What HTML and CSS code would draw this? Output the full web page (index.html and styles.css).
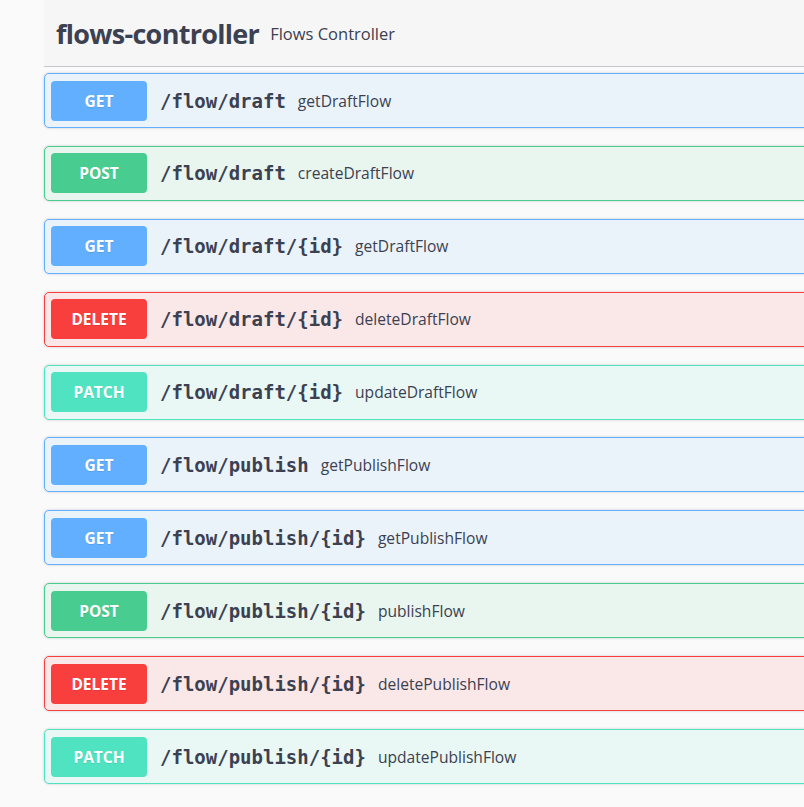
FILE: index.html
```html
<!DOCTYPE html>
<html lang="en">
<head>
<meta charset="utf-8">
<title>flows-controller</title>
<link rel="stylesheet" href="styles.css">
</head>
<body>
<div class="page">
  <div class="inner">
    <div class="tag">
      <h4 class="tag-title">flows-controller</h4>
      <small class="tag-desc">Flows Controller</small>
    </div>
    <div class="ops">
      <div class="op op-get"><span class="method">GET</span><span class="path">/flow/draft</span><span class="desc">getDraftFlow</span></div>
      <div class="op op-post"><span class="method">POST</span><span class="path">/flow/draft</span><span class="desc">createDraftFlow</span></div>
      <div class="op op-get"><span class="method">GET</span><span class="path">/flow/draft/{id}</span><span class="desc">getDraftFlow</span></div>
      <div class="op op-delete"><span class="method">DELETE</span><span class="path">/flow/draft/{id}</span><span class="desc">deleteDraftFlow</span></div>
      <div class="op op-patch"><span class="method">PATCH</span><span class="path">/flow/draft/{id}</span><span class="desc">updateDraftFlow</span></div>
      <div class="op op-get"><span class="method">GET</span><span class="path">/flow/publish</span><span class="desc">getPublishFlow</span></div>
      <div class="op op-get"><span class="method">GET</span><span class="path">/flow/publish/{id}</span><span class="desc">getPublishFlow</span></div>
      <div class="op op-post"><span class="method">POST</span><span class="path">/flow/publish/{id}</span><span class="desc">publishFlow</span></div>
      <div class="op op-delete"><span class="method">DELETE</span><span class="path">/flow/publish/{id}</span><span class="desc">deletePublishFlow</span></div>
      <div class="op op-patch"><span class="method">PATCH</span><span class="path">/flow/publish/{id}</span><span class="desc">updatePublishFlow</span></div>
    </div>
  </div>
</div>
</body>
</html>
```

FILE: styles.css
```css
html, body {
  margin: 0;
  padding: 0;
  background: #fafafa;
}
body {
  font-family: "Open Sans", "Liberation Sans", sans-serif;
  color: #3b4151;
}
.page {
  padding-left: 44px;
  overflow: hidden;
  height: 807px;
}
.inner {
  margin-right: -12px;
}
.tag {
  display: flex;
  align-items: center;
  height: 66px;
  padding: 0 0 0 12px;
  background: #f6f6f6;
  border-bottom: 1px solid #c4c6cb;
  margin-bottom: 6px;
}
.tag-title {
  margin: 0;
  font-size: 27px;
  font-weight: 700;
  letter-spacing: -0.7px;
  color: #3b4151;
}
.tag-desc {
  padding-left: 11px;
  font-size: 16.5px;
  color: #3b4151;
  margin-top: 1px;
}
.ops {
  display: flex;
  flex-direction: column;
  gap: 17.9px;
}
.op {
  display: flex;
  align-items: center;
  height: 53px;
  padding: 0 6px;
  border: 1px solid;
  border-radius: 5px;
  box-shadow: 0 0 3px rgba(0, 0, 0, 0.19);
}
.method {
  display: flex;
  align-items: center;
  justify-content: center;
  width: 96px;
  height: 40px;
  border-radius: 4px;
  color: #fff;
  font-weight: 700;
  font-size: 15.5px;
  text-shadow: 0 1px 0 rgba(0, 0, 0, 0.1);
  flex-shrink: 0;
}
.path {
  padding-left: 13px;
  font-family: "DejaVu Sans Mono", "Liberation Mono", monospace;
  font-weight: 700;
  font-size: 19px;
  color: #3b4151;
}
.desc {
  padding-left: 12px;
  font-size: 15.6px;
  color: #3b4151;
}
.op-get { background: #ebf3fa; border-color: #61affe; }
.op-get .method { background: #61affe; }
.op-post { background: #e9f5ef; border-color: #49cc90; }
.op-post .method { background: #49cc90; }
.op-delete { background: #fae7e7; border-color: #f93e3e; }
.op-delete .method { background: #f93e3e; }
.op-patch { background: #e9f8f4; border-color: #50e3c2; }
.op-patch .method { background: #50e3c2; }
```
